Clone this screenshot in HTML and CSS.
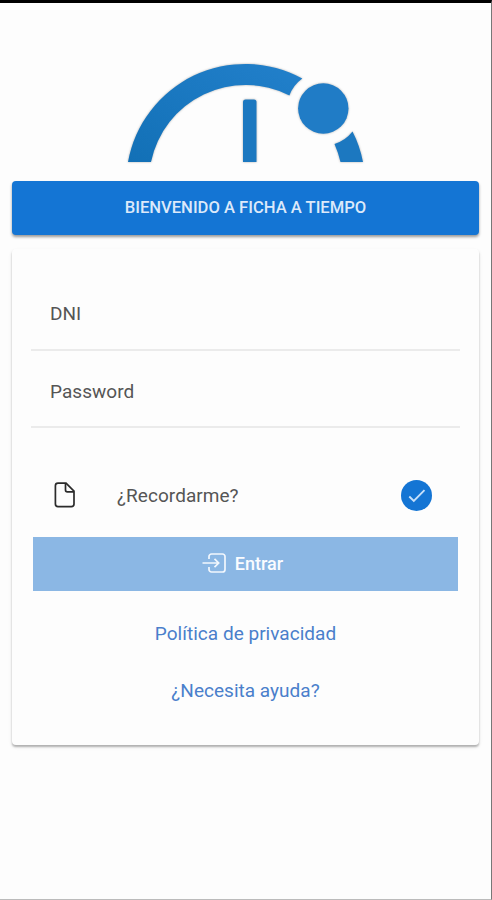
FILE: index.html
```
<!DOCTYPE html>
<html lang="es">

<head>
    <meta charset="UTF-8">
    <meta name="viewport" content="width=device-width, initial-scale=1.0">
    <title>Ficha a tiempo</title>
    <link rel="stylesheet" href="styles.css">
</head>

<body>
    <div class="wrapper">
        <svg class="logo" viewBox="0 0 240 100">
            <defs>
                <linearGradient id="logoFill" x1="0" y1="1" x2="1" y2="0">
                    <stop offset="0" stop-color="#1270b6" />
                    <stop offset="1" stop-color="#2280cb" />
                </linearGradient>
            </defs>
            <path fill="url(#logoFill)" d="M2 100A119.2 119.2 0 0 1 176.3 16.4A37 37 0 0 0 163.4 33.4A96.7 96.7 0 0 0 25 100Z" />
            <path fill="#1c78c0" d="M117 100V40q0-2.500 2.500-2.500h8.500q2.500 0 2.500 2.500V100Z" />
            <circle fill="#207cc6" cx="197.300" cy="46.500" r="25.200" />
            <path fill="#1c78c0" d="M226.500 69.500A37 37 0 0 1 208.500 82Q212 90 214.500 100H237Q234 84 226.500 69.500Z" />
        </svg>
        <div class="title">BIENVENIDO A FICHA A TIEMPO</div>
        <form class="card">
            <div class="field"><label>DNI</label></div>
            <div class="field"><label>Password</label></div>
            <div class="remember">
                <svg class="fileIcon" viewBox="0 0 22 26">
                    <path d="M4 1.200h8l8 8V22a2.600 2.600 0 0 1-2.600 2.600H4A2.600 2.600 0 0 1 1.400 22V3.800A2.600 2.600 0 0 1 4 1.200Z" />
                    <path d="M11.500 1.500V8a1.800 1.800 0 0 0 1.800 1.800H20" />
                </svg>
                <span class="rememberText">¿Recordarme?</span>
                <svg class="check" viewBox="0 0 31 31">
                    <circle cx="15.500" cy="15.500" r="15.500" />
                    <path d="M8.300 16.500l4.500 4.500L23.500 10.200" />
                </svg>
            </div>
            <div class="enterBtn">
                <svg class="enterIcon" viewBox="0 0 24 20">
                    <path d="M7 6V3.500A2.500 2.500 0 0 1 9.500 1H20.500A2.500 2.500 0 0 1 23 3.500V16.500A2.500 2.500 0 0 1 20.500 19H9.500A2.500 2.500 0 0 1 7 16.500V14" />
                    <path d="M0.500 10H16.500M12.500 5.800L16.700 10L12.500 14.200" />
                </svg>
                <span>Entrar</span>
            </div>
            <a class="link">Política de privacidad</a>
            <a class="link">¿Necesita ayuda?</a>
        </form>
    </div>
</body>

</html>
```
FILE: styles.css
```
* {
    padding: 0px;
    margin: 0px;
    box-sizing: border-box;
}

body {
    font-family: Roboto, "Liberation Sans", sans-serif;
    background-color: #fdfdfd;
}

.wrapper {
    height: 900px;
    padding: 59px 12px 0px 12px;
    border-top: 3px solid #000;
    border-right: 1px solid #777;
    border-bottom: 1px solid #bbb;
    overflow: hidden;
}

.logo {
    display: block;
    width: 240px;
    height: 100px;
    margin-left: 114px;
    filter: drop-shadow(0px 0px 1px rgba(0, 0, 0, 0.3));
}

.title {
    height: 54px;
    margin-top: 19px;
    line-height: 53px;
    text-align: center;
    font-size: 16.6px;
    font-weight: 500;
    letter-spacing: 0px;
    color: #dce9fa;
    background-color: #1475d4;
    border-radius: 4px;
    box-shadow: 0px 2px 3px rgba(0, 0, 0, 0.4);
}

.card {
    height: 496px;
    margin-top: 14px;
    padding: 24px 19px 0px 19px;
    border-radius: 4px;
    box-shadow: 0px 2px 2px rgba(0, 0, 0, 0.26), 0px 2px 4px rgba(0, 0, 0, 0.08);
}

.field {
    height: 77.500px;
    padding: 29px 19px 0px 19px;
    line-height: 24px;
    font-size: 19px;
    letter-spacing: 0.05px;
    color: #555;
    border-bottom: 2px solid #ebebeb;
}

.remember {
    display: flex;
    align-items: center;
    height: 54px;
    margin-top: 40px;
    padding: 0px 28px 0px 23px;
}

.fileIcon {
    width: 22px;
    height: 26px;
    fill: none;
    stroke: #2b2b2b;
    stroke-width: 1.7;
}

.rememberText {
    flex: 1;
    margin-left: 41px;
    font-size: 19px;
    letter-spacing: 0.05px;
    color: #555;
}

.check {
    width: 31px;
    height: 31px;
}

.check circle {
    fill: #1475d4;
}

.check path {
    fill: none;
    stroke: #c6e0fa;
    stroke-width: 1.9;
}

.enterBtn {
    display: flex;
    align-items: center;
    justify-content: center;
    height: 54px;
    margin: 15px 2px 0px 2px;
    padding: 0px 6px 2px 0px;
    gap: 9px;
    font-size: 18px;
    font-weight: 500;
    color: #fafcff;
    background-color: #8bb7e4;
}

.enterIcon {
    width: 24px;
    height: 20px;
    fill: none;
    stroke: #f2f7fd;
    stroke-width: 1.7;
}

.link {
    display: block;
    height: 57px;
    line-height: 24px;
    text-align: center;
    font-size: 19px;
    letter-spacing: 0.02px;
    color: #4a7fcb;
}

.enterBtn + .link {
    margin-top: 31px;
}
```
